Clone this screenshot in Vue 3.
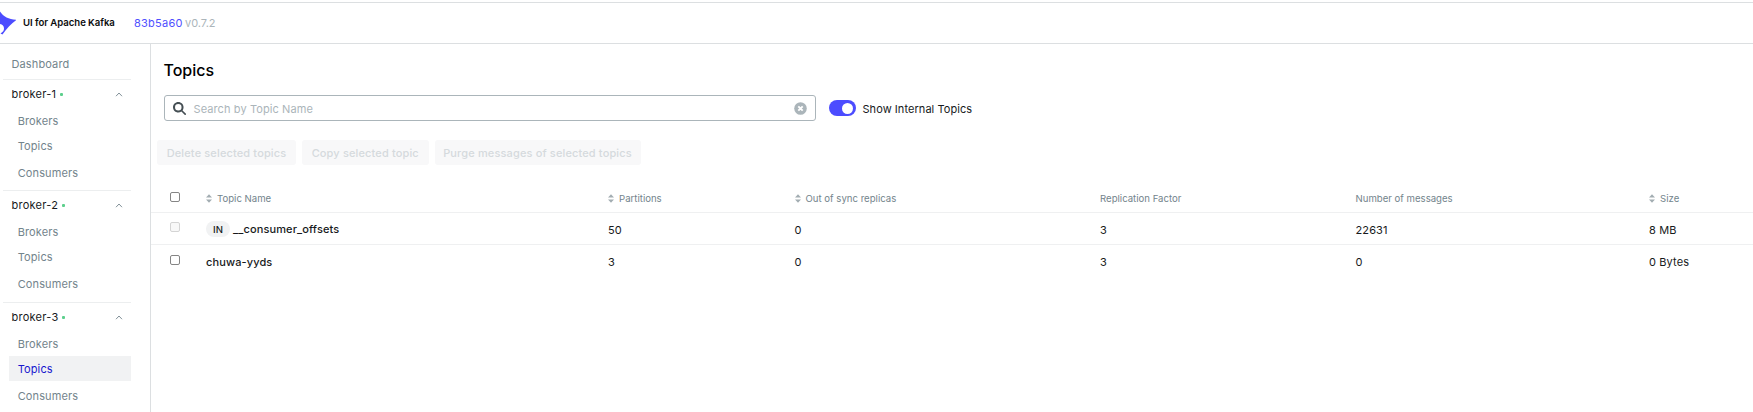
<script setup>
const clusters = [
  { name: 'broker-1', active: '' },
  { name: 'broker-2', active: '' },
  { name: 'broker-3', active: 'Topics' },
]
const links = ['Brokers', 'Topics', 'Consumers']
const columns = [
  { key: 'name', label: 'Topic Name', sortable: true },
  { key: 'partitions', label: 'Partitions', sortable: true },
  { key: 'outOfSync', label: 'Out of sync replicas', sortable: true },
  { key: 'replication', label: 'Replication Factor', sortable: false },
  { key: 'messages', label: 'Number of messages', sortable: false },
  { key: 'size', label: 'Size', sortable: true },
]
const topics = [
  { name: '__consumer_offsets', internal: true, partitions: '50', outOfSync: '0', replication: '3', messages: '22631', size: '8 MB' },
  { name: 'chuwa-yyds', internal: false, partitions: '3', outOfSync: '0', replication: '3', messages: '0', size: '0 Bytes' },
]
</script>

<template>
  <div class="app">
    <header class="navbar">
      <svg class="logo" width="16" height="24" viewBox="0 0 16 24">
        <path d="M0 0.500 C3.500 6 9 8.200 16.500 8.800 C11 12.500 7 17 2.500 23.500 L0.500 22.500 C3 21 4 19.500 4 17.500 C4 15 2.500 13.200 0 13 Z" fill="#4c4cff" />
      </svg>
      <span class="brand">UI for Apache Kafka</span>
      <span class="commit">83b5a60</span>
      <span class="version">v0.7.2</span>
    </header>
    <div class="body">
      <nav class="sidebar">
        <div class="dashboard"><span>Dashboard</span></div>
        <section v-for="c in clusters" :key="c.name" class="cluster">
          <div class="cluster-head">
            <span class="cluster-name">{{ c.name }}</span>
            <i class="status"></i>
            <svg class="chevron" width="8" height="5" viewBox="0 0 8 5">
              <path d="M1 4.200 L4 1 L7 4.200" fill="none" stroke="#73848c" stroke-width="0.900" />
            </svg>
          </div>
          <a v-for="l in links" :key="l" class="link" :class="{ active: c.active === l }">{{ l }}</a>
        </section>
      </nav>
      <main class="content">
        <h1>Topics</h1>
        <div class="controls">
          <div class="search">
            <svg width="13" height="13" viewBox="0 0 512 512">
              <path fill="#454f54" d="M416 208c0 45.900-14.900 88.300-40 122.700L502.600 457.400c12.500 12.500 12.500 32.800 0 45.300s-32.800 12.500-45.300 0L330.700 376c-34.400 25.200-76.800 40-122.700 40C93.100 416 0 322.900 0 208S93.100 0 208 0S416 93.100 416 208zM208 336a128 128 0 1 0 0-256 128 128 0 1 0 0 256z" />
            </svg>
            <span class="placeholder">Search by Topic Name</span>
            <svg class="clear" width="13" height="13" viewBox="0 0 13 13">
              <circle cx="6.500" cy="6.500" r="6.300" fill="#abb5ba" />
              <path d="M4.300 4.300 L8.700 8.700 M8.700 4.300 L4.300 8.700" stroke="#fff" stroke-width="1.900" />
            </svg>
          </div>
          <span class="toggle"><i></i></span>
          <span class="toggle-label">Show Internal Topics</span>
        </div>
        <div class="actions">
          <button class="b1" disabled><span>Delete selected topics</span></button>
          <button class="b2" disabled><span>Copy selected topic</span></button>
          <button class="b3" disabled><span>Purge messages of selected topics</span></button>
        </div>
        <div class="table">
          <div class="row head">
            <div class="cell"><i class="check"></i></div>
            <div v-for="c in columns" :key="c.key" class="cell">
              <svg v-if="c.sortable" class="sort" width="6" height="9" viewBox="0 0 6 9">
                <path d="M0 3.500 L3 0.300 L6 3.500 Z M0 5.500 L6 5.500 L3 8.700 Z" fill="#a3adb2" />
              </svg>
              <span>{{ c.label }}</span>
            </div>
          </div>
          <div v-for="t in topics" :key="t.name" class="row">
            <div class="cell"><i class="check" :class="{ disabled: t.internal }"></i></div>
            <div v-for="c in columns" :key="c.key" class="cell" :class="{ name: c.key === 'name' }">
              <span v-if="c.key === 'name' && t.internal" class="tag">IN</span>
              <span>{{ t[c.key] }}</span>
            </div>
          </div>
        </div>
      </main>
    </div>
  </div>
</template>

<style>
body { background: #fff; overflow: hidden; }
</style>

<style scoped>
.app {
  height: 412px;
  display: flex;
  flex-direction: column;
  box-sizing: border-box;
  padding-top: 2px;
  font-family: Inter, "Liberation Sans", sans-serif;
  font-size: 11px;
  letter-spacing: 0.12px;
  color: #171a1c;
  white-space: nowrap;
  overflow: hidden;
}
.navbar {
  flex: none;
  height: 42px;
  box-sizing: border-box;
  border-top: 1px solid #dcdfe1;
  border-bottom: 1px solid #dcdfe1;
  display: flex;
  align-items: center;
}
.logo { display: block; margin-top: 0; }
.brand { width: 91px; margin: -2px 20px 0 7px; font-size: 9.6px; font-weight: 600; letter-spacing: -0.05px; color: #0b0d0e; }
.commit { width: 48px; margin-right: 3px; color: #4f4fff; letter-spacing: 0.25px; }
.version { color: #abb5ba; letter-spacing: 0; }
.body { flex: 1; display: flex; min-height: 0; }
.sidebar {
  flex: none;
  border-right: 1px solid #dcdfe1;
  padding: 9px 19px 0 3px;
  width: 128px;
  color: #73848c;
}
.dashboard { height: 22px; padding-bottom: 4px; display: flex; align-items: center; padding-left: 8.500px; }
.cluster { height: 111px; box-sizing: border-box; border-top: 1px solid #eceeef; }
.cluster-head { height: 28px; display: flex; align-items: center; padding: 0 8px 0 8.500px; color: #171a1c; }
.cluster-name { letter-spacing: 0.25px; }
.status { width: 3px; height: 3px; margin: 1px 0 0 4px; border-radius: 1px; background: #5ccf8c; }
.chevron { margin-left: auto; }
.link { display: flex; align-items: center; height: 25px; box-sizing: border-box; margin-left: 6px; padding-left: 8.700px; }
.link:nth-of-type(3) { padding-top: 2px; height: 27px; }
.cluster:last-child { margin-top: 1px; }
.link.active { background: #f1f2f3; color: #1717cf; }
.content { flex: 1; min-width: 0; display: flex; flex-direction: column; padding-top: 14px; }
h1 { margin: 0 0 13px 12.500px; height: 24px; line-height: 24px; font-size: 16px; font-weight: 500; letter-spacing: 0; color: #000; }
.controls { display: flex; align-items: center; height: 26px; padding-left: 13px; }
.search {
  width: 652px;
  height: 26px;
  box-sizing: border-box;
  border: 1px solid #abb5ba;
  border-radius: 3px;
  display: flex;
  align-items: center;
  padding: 0 8px;
}
.placeholder { margin: 1px 0 0 7.500px; color: #abb5ba; letter-spacing: 0.1px; }
.clear { margin-left: auto; }
.toggle { width: 27px; height: 16px; margin-left: 13px; border-radius: 8px; background: #4c4cff; display: flex; align-items: center; justify-content: flex-end; }
.toggle i { width: 11px; height: 11px; margin-right: 3px; border-radius: 50%; background: #fff; }
.toggle-label { margin: 1px 0 0 6.500px; letter-spacing: 0.06px; }
.actions { display: flex; gap: 6px; padding-left: 6px; margin-top: 19px; }
button { height: 25px; padding: 1px 0 0; border: 0; border-radius: 3px; background: #f8f8f9; color: #d5dadd; font: 500 11px Inter, sans-serif; letter-spacing: 0.14px; }
.b1 { width: 139px; }
.b2 { width: 126.500px; }
.b3 { width: 206px; }
.table { margin-top: 19px; }
.row {
  height: 32px;
  box-sizing: border-box;
  border-bottom: 1px solid #eff0f1;
  display: grid;
  grid-template-columns: 55px 402px 186.500px 305.500px 255.500px 293.500px 1fr;
  align-items: center;
}
.row.head { height: 29px; color: #73848c; font-size: 9.6px; letter-spacing: 0; }
.row:last-child { border-bottom: 0; }
.cell { display: flex; align-items: center; padding-top: 2px; }
.head .cell { padding-top: 1px; }
.cell:first-child, .head .cell:first-child { padding: 0 0 3px 19px; }
.name { font-weight: 500; padding-top: 1px; letter-spacing: 0.12px; }
.row:last-child .name { padding-top: 2px; }
.check { width: 10px; height: 10px; box-sizing: border-box; border: 1px solid #858585; border-radius: 2px; background: #fff; }
.check.disabled { border-color: #d4d4d4; background: #f8f8f8; }
.sort { margin-right: 5px; }
.tag { width: 24px; height: 16px; margin-right: 3px; border-radius: 8px; background: #f1f2f3; display: flex; align-items: center; justify-content: center; font-size: 9.6px; }
</style>
